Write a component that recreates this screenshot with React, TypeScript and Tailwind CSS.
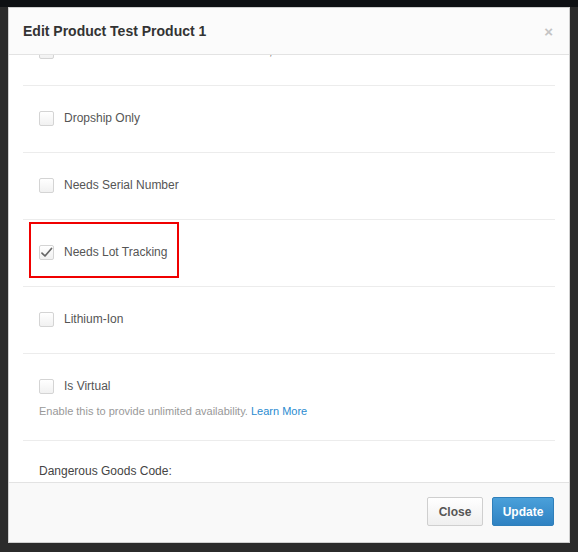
import React from 'react';

const font = { fontFamily: '"Liberation Sans", Arial, Helvetica, sans-serif' };

function Checkbox({ checked = false }: { checked?: boolean }) {
  return (
    <span className="flex h-[15px] w-[15px] shrink-0 items-center justify-center rounded-[2px] border border-[#d4d4d4] bg-gradient-to-b from-white to-[#f1f1f1]">
      {checked && (
        <svg width="13" height="13" viewBox="0 0 13 13" fill="none">
          <path d="M2 7.2 L5 10 L11.5 2.5" stroke="#666" strokeWidth="1.7" strokeLinecap="round" strokeLinejoin="round" />
        </svg>
      )}
    </span>
  );
}

function CheckRow({ label, checked, highlight }: { label: string; checked?: boolean; highlight?: boolean }) {
  return (
    <div className="pl-[16px] pt-[24px] pb-[26px]">
      <div className="flex">
        <div
          className={`flex items-center gap-[10px] ${
            highlight ? '-mx-[10px] -mt-[22px] -mb-[18px] border-[2px] border-[#f00000] pl-[8px] pr-[10px] pt-[20px] pb-[16px]' : ''
          }`}
        >
          <Checkbox checked={checked} />
          <span className="text-[12px] leading-4 text-[#555]">{label}</span>
        </div>
      </div>
    </div>
  );
}

const rows = [
  { label: 'Dropship Only' },
  { label: 'Needs Serial Number' },
  { label: 'Needs Lot Tracking', checked: true, highlight: true },
  { label: 'Lithium-Ion' },
];

export default function App() {
  return (
    <div className="h-[552px] w-[578px] overflow-hidden bg-[linear-gradient(#0e1013_0_7px,#2b2b2b_7px)] pl-[8px] pt-[7px]" style={font}>
      <div className="flex h-[536px] w-[562px] flex-col overflow-hidden border border-[#cfcfcf] bg-white">
        <div className="flex h-[47px] shrink-0 items-center justify-between border-b border-[#e3e3e3] bg-[#fbfbfb] pl-[14px] pr-[16px]">
          <h2 className="text-[14px] font-bold text-[#333]">Edit Product Test Product 1</h2>
          <span className="text-[15px] font-bold leading-none text-[#c4c4c4]">×</span>
        </div>
        <div className="flex-1 overflow-hidden px-[14px]">
          <div className="-mt-[36px]">
            <CheckRow label="Don't show this item on customs forms, even if it's in the order" />
          </div>
          {rows.map((r) => (
            <div key={r.label} className="border-t border-[#ececec]">
              <CheckRow label={r.label} checked={r.checked} highlight={r.highlight} />
            </div>
          ))}
          <div className="border-t border-[#ececec] pl-[16px] pt-[24px] pb-[22px]">
            <div className="flex items-center gap-[10px]">
              <Checkbox />
              <span className="text-[12px] leading-4 text-[#555]">Is Virtual</span>
            </div>
            <p className="mt-[10px] text-[11px] leading-[14px] text-[#999]">
              Enable this to provide unlimited availability. <span className="text-[#2a8bd0]">Learn More</span>
            </p>
          </div>
          <div className="border-t border-[#ececec] pl-[16px] pt-[17px]">
            <span className="text-[12px] leading-4 text-[#444]">Dangerous Goods Code:</span>
          </div>
        </div>
        <div className="flex h-[60px] shrink-0 items-start justify-end gap-[9px] border-t border-[#e3e3e3] bg-[#f9f9f9] pr-[15px] pt-[14px]">
          <button className="h-[29px] w-[56px] rounded-[2px] border border-[#cfcfcf] bg-gradient-to-b from-white to-[#efefef] text-[12px] font-bold text-[#555]">
            Close
          </button>
          <button className="h-[29px] w-[62px] rounded-[2px] border border-[#2f7fba] bg-gradient-to-b from-[#4aa0da] to-[#2f82c2] text-[12px] font-bold text-white">
            Update
          </button>
        </div>
      </div>
    </div>
  );
}
